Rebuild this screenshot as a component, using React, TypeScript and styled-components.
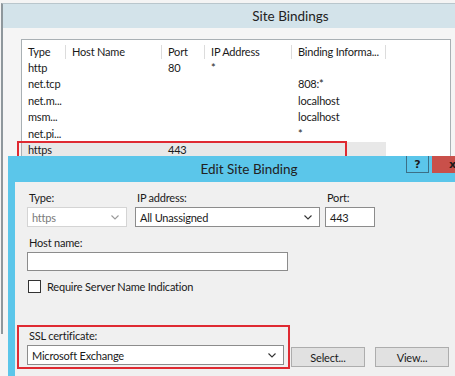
import styled, { createGlobalStyle } from "styled-components";

const GlobalStyle = createGlobalStyle`
  body {
    margin: 0;
    background: #f4f4f4;
    overflow: hidden;
    font-family: "Lato", "Noto Sans", sans-serif;
    font-size: 11px;
    letter-spacing: -0.2px;
    color: #1a1a1a;
  }
`;

const Desktop = styled.div`
  position: relative;
  width: 455px;
  height: 376px;
  overflow: hidden;
`;

const BindingsWindow = styled.div`
  margin: 3px 0 0 1px;
  width: 575px;
  height: 330px;
  border-left: 2px solid #8e979c;
  border-top: 1px solid #b9c6cc;
  background: #f5f5f5;
`;

const TitleBar = styled.div<{ $tone: "grey" | "blue" }>`
  height: ${(p) => (p.$tone === "grey" ? "24px" : "26px")};
  display: flex;
  align-items: center;
  justify-content: center;
  position: relative;
  background: ${(p) => (p.$tone === "grey" ? "#d3e3ea" : "#5bc6ea")};
  font-size: 13.5px;
  letter-spacing: 0;
  color: #222;
`;

const WindowBody = styled.div`
  padding: 11px 0 0 18px;
`;

const ListView = styled.div`
  width: 428px;
  height: 240px;
  border: 1px solid #a9b0b4;
  background: #fff;
`;

const cols = "44px 96px 43px 87px 94px";

const HeaderRow = styled.div`
  display: grid;
  grid-template-columns: ${cols};
  height: 20px;
  align-items: end;
  padding-bottom: 1px;
  box-sizing: border-box;
`;

const HeaderCell = styled.div`
  height: 14px;
  line-height: 14px;
  padding-left: 6px;
  border-right: 1px solid #dcdcdc;
  white-space: nowrap;
  overflow: hidden;
`;

const Row = styled.div<{ $selected?: boolean }>`
  position: relative;
  display: grid;
  grid-template-columns: ${cols};
  width: fit-content;
  height: 16.4px;
  line-height: 16px;
  background: ${(p) => (p.$selected ? "#e8e8e8" : "transparent")};
`;

const Cell = styled.div`
  padding-left: 6px;
  white-space: nowrap;
`;

const Highlight = styled.div<{ $w: number }>`
  position: absolute;
  left: -5px;
  top: -1px;
  width: ${(p) => p.$w}px;
  height: 17px;
  border: 2px solid #df2a32;
  pointer-events: none;
`;

const Dialog = styled.div`
  position: absolute;
  left: 8px;
  top: 156px;
  width: 468px;
  height: 240px;
  background: #5bc6ea;
  padding: 0 7px;
`;

const CaptionGroup = styled.div`
  position: absolute;
  top: 0;
  right: 6px;
  display: flex;
  gap: 3px;
`;

const CaptionButton = styled.div<{ $close?: boolean }>`
  width: ${(p) => (p.$close ? "45px" : "23px")};
  height: 17px;
  box-sizing: border-box;
  border: ${(p) => (p.$close ? "none" : "1px solid #3c6f86")};
  border-top: none;
  background: ${(p) => (p.$close ? "#c9504a" : "#5bc6ea")};
  display: flex;
  align-items: center;
  justify-content: ${(p) => (p.$close ? "flex-start" : "center")};
  padding-left: ${(p) => (p.$close ? "17px" : "0")};
  font-family: "DejaVu Sans", sans-serif;
  font-weight: bold;
  font-size: 11px;
  color: #1b1b1b;
`;

const DialogBody = styled.div`
  background: #f0f0f0;
  height: 100%;
  padding: 9px 0 0 12px;
`;

const FieldRow = styled.div`
  display: flex;
  align-items: flex-end;
`;

const Field = styled.div<{ $gap?: number; $top?: number }>`
  display: flex;
  flex-direction: column;
  margin-left: ${(p) => p.$gap ?? 0}px;
  margin-top: ${(p) => p.$top ?? 0}px;
`;

const Label = styled.div`
  height: 16px;
  line-height: 14px;
  padding-left: 2px;
`;

const Box = styled.div<{ $w: number; $h?: number; $disabled?: boolean }>`
  box-sizing: border-box;
  width: ${(p) => p.$w}px;
  height: ${(p) => p.$h ?? 20}px;
  border: 1px solid ${(p) => (p.$disabled ? "#d4d4d4" : "#8c8c8c")};
  background: #fff;
  display: flex;
  align-items: center;
  justify-content: space-between;
  padding: 0 7px 0 4px;
  color: ${(p) => (p.$disabled ? "#7a7a7a" : "#1a1a1a")};
`;

const CheckRow = styled.div`
  display: flex;
  align-items: center;
  gap: 6px;
  margin-top: 9px;
  padding-left: 1px;
`;

const CheckBox = styled.div`
  width: 13px;
  height: 13px;
  box-sizing: border-box;
  border: 1px solid #333;
  background: #fff;
`;

const BottomRow = styled.div`
  display: flex;
  align-items: flex-end;
  margin: 32px 0 0 -10px;
`;

const SslGroup = styled.div`
  width: 273px;
  box-sizing: border-box;
  border: 2px solid #df2a32;
  padding: 2px 4px 2px 8px;
`;

const Button = styled.div<{ $gap: number }>`
  box-sizing: border-box;
  width: 74px;
  height: 20px;
  margin: 0 0 2px ${(p) => p.$gap}px;
  border: 1px solid #adadad;
  background: #e1e1e1;
  display: flex;
  align-items: center;
  justify-content: center;
`;

const Chevron = ({ color = "#333" }: { color?: string }) => (
  <svg width="8" height="5" viewBox="0 0 8 5">
    <polyline points="0.5,0.5 4,4 7.5,0.5" fill="none" stroke={color} strokeWidth="1.1" />
  </svg>
);

const rows = [
  ["http", "", "80", "*", ""],
  ["net.tcp", "", "", "", "808:*"],
  ["net.m...", "", "", "", "localhost"],
  ["msm...", "", "", "", "localhost"],
  ["net.pi...", "", "", "", "*"],
];

export default function App() {
  return (
    <Desktop>
      <GlobalStyle />
      <BindingsWindow>
        <TitleBar $tone="grey">Site Bindings</TitleBar>
        <WindowBody>
          <ListView>
            <HeaderRow>
              {["Type", "Host Name", "Port", "IP Address", "Binding Informa..."].map((h) => (
                <HeaderCell key={h}>{h}</HeaderCell>
              ))}
            </HeaderRow>
            {rows.map((r) => (
              <Row key={r[0]}>
                {r.map((c, i) => (
                  <Cell key={i}>{c}</Cell>
                ))}
              </Row>
            ))}
            <Row $selected>
              <Cell>https</Cell>
              <Cell />
              <Cell>443</Cell>
              <Cell />
              <Cell />
              <Highlight $w={326} />
            </Row>
          </ListView>
        </WindowBody>
      </BindingsWindow>

      <Dialog>
        <TitleBar $tone="blue">
          Edit Site Binding
          <CaptionGroup>
            <CaptionButton>?</CaptionButton>
            <CaptionButton $close>x</CaptionButton>
          </CaptionGroup>
        </TitleBar>
        <DialogBody>
          <FieldRow>
            <Field>
              <Label>Type:</Label>
              <Box $w={100} $disabled>
                https
                <Chevron color="#9a9a9a" />
              </Box>
            </Field>
            <Field $gap={8}>
              <Label>IP address:</Label>
              <Box $w={185}>
                All Unassigned
                <Chevron />
              </Box>
            </Field>
            <Field $gap={5}>
              <Label>Port:</Label>
              <Box $w={50}>443</Box>
            </Field>
          </FieldRow>
          <Field $top={9}>
            <Label>Host name:</Label>
            <Box $w={261} $h={19} />
          </Field>
          <CheckRow>
            <CheckBox />
            Require Server Name Indication
          </CheckRow>
          <BottomRow>
            <SslGroup>
              <Label>SSL certificate:</Label>
              <Box $w={257}>
                Microsoft Exchange
                <Chevron />
              </Box>
            </SslGroup>
            <Button $gap={1}>Select...</Button>
            <Button $gap={10}>View...</Button>
          </BottomRow>
        </DialogBody>
      </Dialog>
    </Desktop>
  );
}
